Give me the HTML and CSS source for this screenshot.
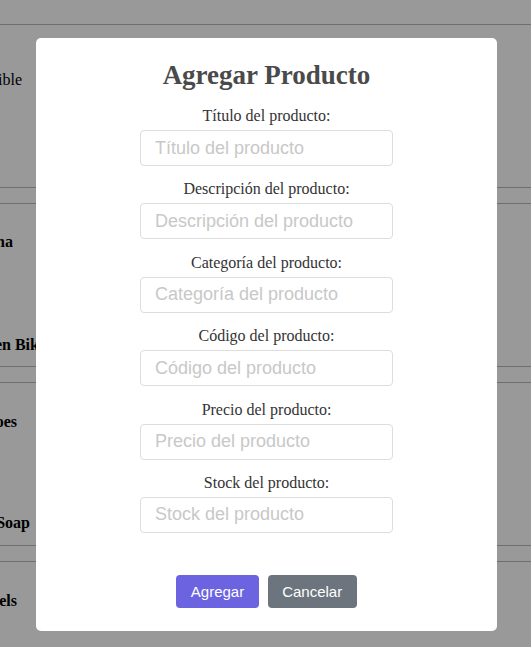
FILE: index.html
```html
<!DOCTYPE html>
<html lang="es">
<head>
<meta charset="utf-8">
<title>Agregar Producto</title>
<link rel="stylesheet" href="styles.css">
</head>
<body>
<div class="page">
  <div class="row">
    <div class="cell cell-a"><span class="plain">Disponible</span></div>
  </div>
  <div class="row">
    <div class="cell cell-b"><b>Lasagna</b></div>
    <div class="cell cell-c"><b>Golden Bike</b></div>
  </div>
  <div class="row">
    <div class="cell cell-d"><b>Shoes</b></div>
    <div class="cell cell-e"><b>Hand Soap</b></div>
  </div>
  <div class="row">
    <div class="cell cell-f"><b>Towels</b></div>
  </div>
</div>

<div class="overlay">
  <div class="modal">
    <h2 class="modal-title">Agregar Producto</h2>
    <form class="form">
      <div class="group">
        <label class="label">Título del producto:</label>
        <input class="input" type="text" placeholder="Título del producto">
      </div>
      <div class="group">
        <label class="label">Descripción del producto:</label>
        <input class="input" type="text" placeholder="Descripción del producto">
      </div>
      <div class="group">
        <label class="label">Categoría del producto:</label>
        <input class="input" type="text" placeholder="Categoría del producto">
      </div>
      <div class="group">
        <label class="label">Código del producto:</label>
        <input class="input" type="text" placeholder="Código del producto">
      </div>
      <div class="group">
        <label class="label">Precio del producto:</label>
        <input class="input" type="text" placeholder="Precio del producto">
      </div>
      <div class="group">
        <label class="label">Stock del producto:</label>
        <input class="input" type="text" placeholder="Stock del producto">
      </div>
      <div class="actions">
        <button type="button" class="btn btn-primary">Agregar</button>
        <button type="button" class="btn btn-secondary">Cancelar</button>
      </div>
    </form>
  </div>
</div>
</body>
</html>
```

FILE: styles.css
```css
* { box-sizing: border-box; }

html, body {
  margin: 0;
  padding: 0;
  height: 100%;
  background: #fff;
  font-family: "Liberation Serif", "Times New Roman", serif;
  color: #000;
}

.page {
  padding-top: 24px;
}

.row {
  height: 164px;
  border-top: 1px solid #b9b9b9;
  border-bottom: 1px solid #b9b9b9;
  margin-bottom: 15px;
  font-size: 16px;
}

.cell {
  height: 20px;
  line-height: 20px;
  display: flex;
  justify-content: flex-end;
  white-space: nowrap;
}

.plain { font-weight: normal; }

.cell-a { width: 22px; margin-top: 45px; }
.cell-b { width: 13px; margin-top: 28px; }
.cell-c { width: 46px; margin-top: 83px; }
.cell-d { width: 17px; margin-top: 29px; }
.cell-e { width: 30px; margin-top: 81px; }
.cell-f { width: 17px; margin-top: 29px; }

.overlay {
  position: fixed;
  inset: 0;
  background: rgba(0, 0, 0, 0.4);
  display: flex;
  justify-content: center;
  align-items: flex-start;
  padding: 38px 0 0 2px;
}

.modal {
  width: 461px;
  background: #fff;
  border-radius: 5px;
  padding: 22px 0 23px;
  text-align: center;
}

.modal-title {
  margin: 0 0 17px;
  font-size: 27px;
  line-height: 30px;
  font-weight: bold;
  color: #4a4a4a;
}

.form {
  display: flex;
  flex-direction: column;
  align-items: center;
  gap: 14.4px;
}

.group {
  display: flex;
  flex-direction: column;
  align-items: center;
}

.label {
  font-size: 16px;
  line-height: 17px;
  color: #333;
  margin-bottom: 6px;
}

.input {
  width: 253px;
  height: 36px;
  border: 1px solid #ddd;
  border-radius: 4px;
  padding: 0 14px;
  font-family: "Liberation Sans", Arial, sans-serif;
  font-size: 18px;
  color: #333;
  outline: none;
}

.input::placeholder {
  color: #c8c8c8;
}

.actions {
  display: flex;
  gap: 9px;
  margin-top: 27.6px;
}

.btn {
  height: 33px;
  padding: 0 14.5px;
  border: none;
  border-radius: 4px;
  font-family: "Liberation Sans", Arial, sans-serif;
  font-size: 15px;
  color: #fff;
  cursor: pointer;
}

.btn-primary { background: #6c63e0; }
.btn-secondary { background: #6c757d; }
```
